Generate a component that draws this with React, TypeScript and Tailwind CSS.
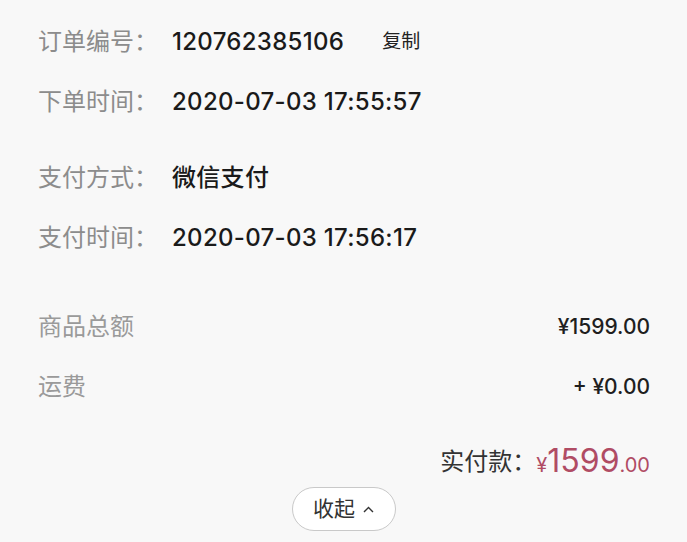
const labelCls = "w-[134px] shrink-0 text-[24px] text-[#8c8c8c]";
const valueCls = "text-[24px] font-medium text-[#1a1a1a] tracking-[0.3px]";

function InfoRow({ label, children }: { label: string; children: React.ReactNode }) {
  return (
    <div className="flex h-[60px] items-center">
      <div className={labelCls}>{label}</div>
      <div className="flex items-center">{children}</div>
    </div>
  );
}

function SumRow({ label, value }: { label: string; value: string }) {
  return (
    <div className="flex h-[60px] items-center justify-between">
      <div className="text-[24px] text-[#9a9a9a]">{label}</div>
      <div className="text-[21px] font-medium text-[#1f1f1f]">{value}</div>
    </div>
  );
}

export default function App() {
  return (
    <div
      className="h-[542px] w-[687px] overflow-hidden bg-[#f8f8f8] pl-[38px] pr-[37px] pt-[12px]"
      style={{ fontFamily: 'Inter, "Noto Sans CJK SC", sans-serif' }}
    >
      {/* order info */}
      <InfoRow label="订单编号：">
        <span className={valueCls}>120762385106</span>
        <button className="ml-[38px] text-[19px] text-[#222]">复制</button>
      </InfoRow>
      <InfoRow label="下单时间：">
        <span className={valueCls}>2020-07-03 17:55:57</span>
      </InfoRow>

      <div className="mt-[16px]">
        <InfoRow label="支付方式：">
          <span className={valueCls}>微信支付</span>
        </InfoRow>
        <InfoRow label="支付时间：">
          <span className={valueCls}>2020-07-03 17:56:17</span>
        </InfoRow>
      </div>

      {/* amounts */}
      <div className="mt-[29px]">
        <SumRow label="商品总额" value="¥1599.00" />
        <SumRow label="运费" value="+ ¥0.00" />
      </div>

      <div className="mt-[20px] flex h-[50px] items-center justify-end">
        <span className="text-[24px] text-[#333]">实付款：</span>
        <span className="flex items-baseline text-[#b04c64]">
          <span className="text-[20px]">¥</span>
          <span className="text-[32px] leading-none">1599</span>
          <span className="text-[20px]">.00</span>
        </span>
      </div>

      <div className="flex justify-center pr-[1px]">
        <button className="flex h-[44px] w-[104px] items-center justify-center gap-[8px] rounded-full border border-[#c9c9c9] bg-white text-[21px] text-[#333]">
          <span>收起</span>
          <svg width="11" height="7" viewBox="0 0 11 7" fill="none" stroke="#333" strokeWidth="1.4">
            <path d="M1 6 L5.5 1.5 L10 6" />
          </svg>
        </button>
      </div>
    </div>
  );
}
